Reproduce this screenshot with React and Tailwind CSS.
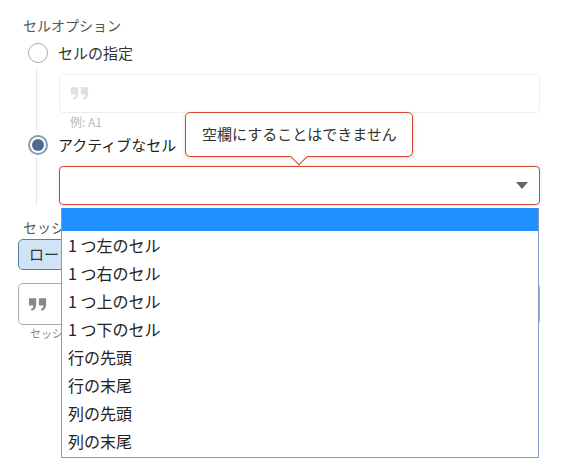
import React from "react";

const Quote = ({ className }) => (
  <svg viewBox="0 0 20 14" className={className} fill="currentColor">
    <path d="M0 0h8v7c0 4-2 6-5 7l-1-2c2-1 3-2 3-4H0z" />
    <path d="M11 0h8v7c0 4-2 6-5 7l-1-2c2-1 3-2 3-4h-5z" />
  </svg>
);

const items = ["1 つ左のセル", "1 つ右のセル", "1 つ上のセル", "1 つ下のセル", "行の先頭", "行の末尾", "列の先頭", "列の末尾"];

export default function App() {
  return (
    <div className="relative w-[570px] h-[470px] bg-white text-[#333]" style={{ fontFamily: '"Noto Sans CJK JP", "Noto Sans", sans-serif' }}>
      <div className="pt-[14px] pl-[23px] pr-[30px]">
        <div className="text-[14px] text-[#555] leading-[22px]">セルオプション</div>
        <div className="flex items-center gap-[10px] pl-[5px] mt-[4px] h-[26px]">
          <span className="w-[20px] h-[20px] rounded-full border border-[#aaa] bg-white" />
          <span className="text-[15px] text-[#333]">セルの指定</span>
        </div>
        <div className="flex ml-[13px]">
          <div className="w-px bg-[#e6e6e6] my-[2px]" />
          <div className="flex-1 pl-[22px] pt-[8px] pb-[2px]">
            <div className="h-[39px] border border-[#eee] rounded-[4px] flex items-center pl-[11px]">
              <Quote className="w-[18px] h-[13px] text-[#e0e0e0]" />
            </div>
            <div className="text-[12px] text-[#bbb] pl-[11px] mt-[1px] leading-[16px]">例: A1</div>
          </div>
        </div>
        <div className="flex items-center gap-[10px] pl-[5px] h-[26px]">
          <span className="w-[20px] h-[20px] rounded-full border-2 border-[#8a9ab0] bg-white flex items-center justify-center">
            <span className="w-[12px] h-[12px] rounded-full bg-[#4e6a8f]" />
          </span>
          <span className="text-[15px] text-[#222]">アクティブなセル</span>
        </div>
        <div className="flex ml-[13px]">
          <div className="w-px bg-[#e6e6e6]" />
          <div className="flex-1 pl-[22px] pt-[8px]">
            <div className="h-[39px] border border-[#d2462c] rounded-[4px] flex items-center justify-end pr-[11px] shadow-[0_0_4px_rgba(0,0,0,0.1)]">
              <span className="w-0 h-0 border-l-[6px] border-r-[6px] border-t-[7px] border-l-transparent border-r-transparent border-t-[#666]" />
            </div>
          </div>
        </div>
        <div className="text-[14px] text-[#555] mt-[12px] leading-[20px]">セッション</div>
        <div className="-ml-[5px] mt-[2px] inline-flex h-[31px] items-center px-[10px] bg-[#d0e4f5] border border-[#5a7ca0] rounded-[5px] text-[15px]">ローカル</div>
        <div className="-ml-[5px] mt-[13px] h-[42px] border border-[#aaa] rounded-[5px] flex items-center pl-[10px]">
          <Quote className="w-[18px] h-[13px] text-[#888]" />
        </div>
        <div className="text-[11px] text-[#888] pl-[7px] leading-[16px]">セッション名</div>
      </div>

      <div className="absolute left-[61px] top-[208px] w-[478px] border border-[#7f9dc9] border-t-0 bg-white">
        <div className="h-[23px] bg-[#1e90ff]" />
        {items.map((t) => (
          <div key={t} className="h-[28px] flex items-center pl-[6px] text-[16px] text-[#222]">{t}</div>
        ))}
        <div className="h-[2px]" />
      </div>

      <div className="absolute left-[185px] top-[112px] w-[228px] h-[45px] border border-[#d2462c] rounded-[5px] bg-white flex items-center pl-[16px] text-[15px] text-[#333] shadow-[0_1px_4px_rgba(0,0,0,0.15)]">
        空欄にすることはできません
        <span className="absolute left-[107px] -bottom-[7px] w-[12px] h-[12px] bg-white border-r border-b border-[#d2462c] rotate-45" />
      </div>
    </div>
  );
}
